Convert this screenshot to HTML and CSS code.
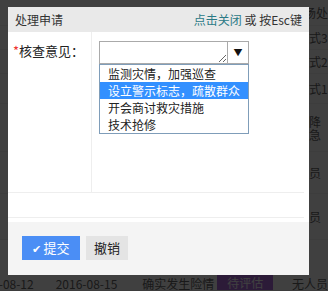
FILE: index.html
```html
<!DOCTYPE html>
<html lang="zh-CN">
<head>
  <meta charset="UTF-8" />
  <title>处理申请</title>
  <link rel="stylesheet" href="styles.css">
</head>
<body>

  <div class="list">
    <div class="row r1"><span class="c1">处理</span><span class="c2"></span><span class="c3"></span><span class="c4"></span><span class="c5">现场处</span></div>
    <div class="row r2"><span class="c1">自主</span><span class="c2"></span><span class="c3"></span><span class="c4"></span><span class="c5">方式3</span></div>
    <div class="row r3"><span class="c1">(</span><span class="c2"></span><span class="c3"></span><span class="c4"></span><span class="c5">方式2</span></div>
    <div class="row r4"><span class="c1">(:</span><span class="c2"></span><span class="c3"></span><span class="c4"></span><span class="c5">方式1</span></div>
    <div class="row r5"><span class="c1">(</span><span class="c2"></span><span class="c3"></span><span class="c4"></span><span class="c5">压降<br>紧急</span></div>
    <div class="row r6"><span class="c1">(</span><span class="c2"></span><span class="c3"></span><span class="c4"></span><span class="c5">人员</span></div>
    <div class="row r7"><span class="c1">(:</span><span class="c2"></span><span class="c3"></span><span class="c4"></span><span class="c5">人员</span></div>
    <div class="row r8"><span class="c1">2016-08-12</span><span class="c2">2016-08-15</span><span class="c3">确实发生险情</span><span class="c4"><em class="badge">待评估</em></span><span class="c5">无人员</span></div>
  </div>

  <div class="mask"></div>

  <div class="dialog">
    <div class="dialog-head">
      <span>处理申请</span>
      <span><a class="close" href="#">点击关闭</a> 或 按Esc键</span>
    </div>

    <div class="dialog-body">
      <div class="form-row">
        <div class="form-label"><i class="req">*</i>核查意见：</div>
        <div class="form-field">
          <div class="combo">
            <textarea class="combo-text"></textarea>
            <span class="combo-btn">▼</span>
          </div>
          <ul class="options">
            <li>监测灾情，加强巡查</li>
            <li class="selected">设立警示标志，疏散群众</li>
            <li>开会商讨救灾措施</li>
            <li>技术抢修</li>
          </ul>
        </div>
      </div>
      <div class="form-row empty"></div>
    </div>

    <div class="dialog-foot">
      <button class="btn btn-ok"><span class="tick">✔</span>提交</button>
      <button class="btn btn-cancel">撤销</button>
    </div>
  </div>

</body>
</html>
```

FILE: styles.css
```css
* {
  box-sizing: border-box;
  margin: 0;
  padding: 0;
  font-family: 'Microsoft YaHei', 'Noto Sans CJK SC', 'Noto Sans', sans-serif;
}

body {
  background-color: #fff;
  color: #333;
  font-size: 12px;
  overflow: hidden;
  width: 328px;
  height: 291px;
}

/* page behind the dialog */
.list {
  margin-left: -50px;
  color: #666;
}

.row {
  display: flex;
  align-items: center;
  border-bottom: 1px solid #f2f2f2;
  line-height: 13px;
  white-space: nowrap;
}

.r1 { height: 26px; }
.r2 { height: 24px; }
.r3 { height: 24px; }
.r4 { height: 30px; }
.r5 { height: 48px; }
.r6 { height: 42px; }
.r7 { height: 46px; }
.r8 { height: 51px; align-items: flex-end; }

.c1 { width: 107px; text-align: right; padding-right: 22px; }
.c2 { width: 88px; }
.c3 { width: 76px; }
.c4 { width: 76px; }
.c5 { flex: 1; }

.badge {
  font-style: normal;
  display: inline-block;
  background-color: #b06ce0;
  color: #fff;
  padding: 1px 10px;
}

.mask {
  position: fixed;
  inset: 0;
  background-color: rgba(0, 0, 0, 0.75);
}

/* dialog */
.dialog {
  position: fixed;
  left: 8px;
  top: 7px;
  width: 301px;
  height: 268px;
  background-color: #fff;
  display: flex;
  flex-direction: column;
}

.dialog-head {
  height: 25px;
  background-color: #e9e9e9;
  display: flex;
  justify-content: space-between;
  align-items: center;
  padding: 0 7px;
  font-size: 12px;
  color: #333;
}

.close {
  color: #2b7a86;
  text-decoration: none;
}

.dialog-body {
  flex: 1;
  padding-right: 5px;
}

.form-row {
  display: flex;
  height: 161px;
  border-bottom: 1px solid #eee;
}

.form-row.empty {
  height: 25px;
}

.form-label {
  width: 84px;
  border-right: 1px solid #eee;
  padding: 9px 0 0 5px;
  font-size: 13px;
  color: #222;
}

.req {
  font-style: normal;
  color: #e33;
}

.form-field {
  padding: 9px 0 0 7px;
}

.combo {
  display: flex;
  width: 150px;
  height: 23px;
}

.combo-text {
  width: 128px;
  height: 23px;
  border: 1px solid #aaa;
  border-right: none;
  resize: both;
  outline: none;
}

.combo-btn {
  width: 22px;
  height: 23px;
  border: 1px solid #aaa;
  font-size: 9px;
  color: #111;
  display: flex;
  align-items: center;
  justify-content: center;
}

.options {
  list-style: none;
  width: 150px;
  border: 1px solid #7f9db9;
  font-size: 12px;
  color: #222;
}

.options li {
  height: 17px;
  line-height: 17px;
  padding-left: 8px;
  white-space: nowrap;
}

.options .selected {
  background-color: #3390ff;
  color: #fff;
}

.dialog-foot {
  height: 53px;
  background-color: #f4f4f4;
  display: flex;
  align-items: center;
  padding: 0 0 2px 14px;
  gap: 6px;
}

.btn {
  height: 24px;
  border: none;
  font-size: 13px;
  padding: 0;
  white-space: nowrap;
}

.btn-ok {
  width: 58px;
  background-color: #4b8ef5;
  color: #fff;
}

.tick {
  font-size: 11px;
  margin-right: 2px;
}

.btn-cancel {
  width: 42px;
  background-color: #e4e4e4;
  color: #222;
}
```
